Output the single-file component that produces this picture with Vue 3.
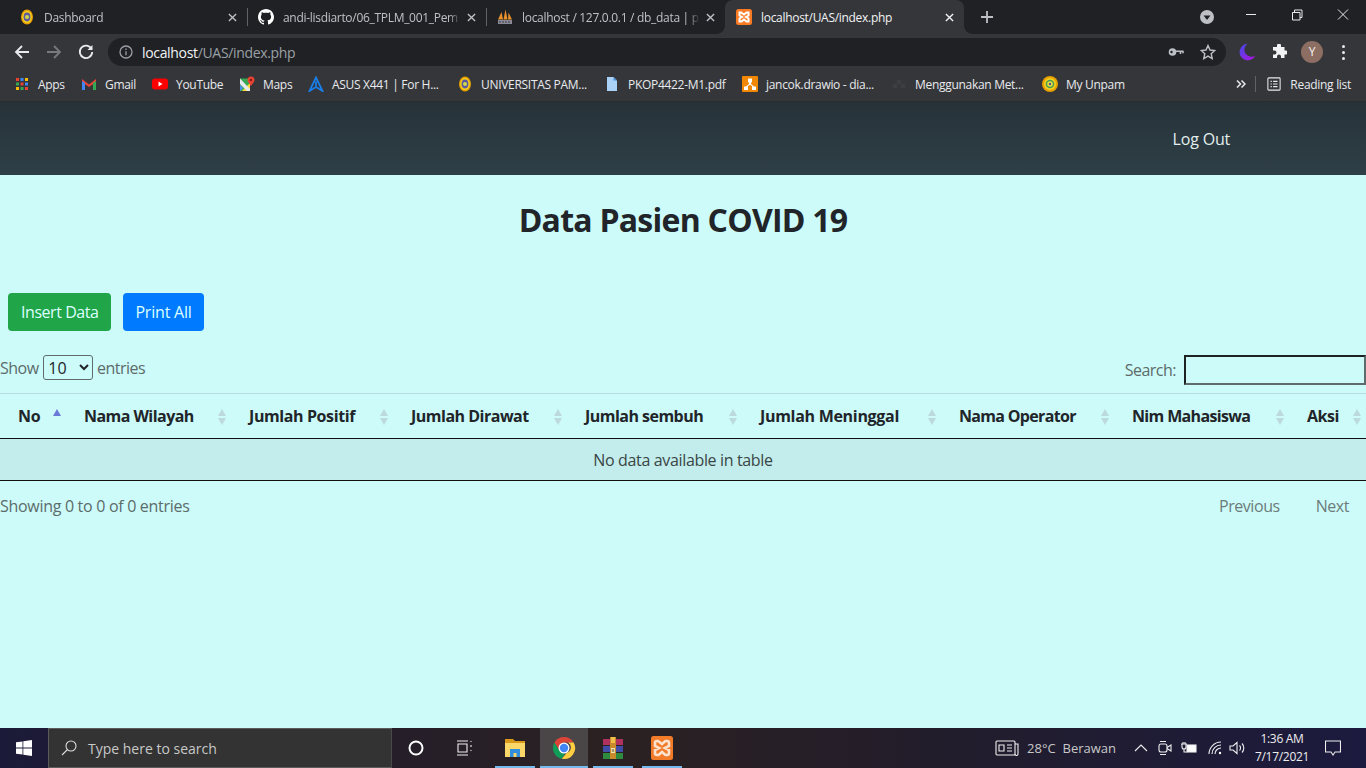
<template>
  <div class="screen">
    <header class="chrome">
      <div class="tabstrip">
        <div class="tabs">
          <div v-for="tab in tabs" :key="tab.title" class="tab" :class="{ active: tab.active }">
            <svg v-if="tab.icon === 'unpam'" class="favicon" viewBox="0 0 16 16">
              <ellipse cx="8" cy="8" rx="6" ry="7.5" fill="#e8a000" /><ellipse cx="8" cy="8" rx="4.8" ry="6" fill="#f2d020" /><ellipse cx="8" cy="8" rx="3.4" ry="4.4" fill="#5f58a0" /><circle cx="8" cy="8" r="2" fill="#cdd84a" />
            </svg>
            <svg v-else-if="tab.icon === 'github'" class="favicon" viewBox="0 0 16 16">
              <path fill="#fff" d="M8 0C3.6 0 0 3.6 0 8c0 3.5 2.3 6.5 5.500 7.600.4.1.5-.2.5-.4v-1.400c-2.200.5-2.700-1-2.700-1-.4-.9-.9-1.200-.9-1.200-.7-.5.1-.5.1-.5.8.1 1.200.8 1.200.8.700 1.200 1.900.9 2.300.7.1-.5.3-.9.5-1.100-1.800-.2-3.600-.9-3.600-4 0-.9.3-1.600.8-2.100-.1-.2-.4-1 .1-2.100 0 0 .7-.2 2.200.8.6-.2 1.300-.3 2-.3s1.400.1 2 .3c1.500-1 2.200-.8 2.200-.8.4 1.100.2 1.900.1 2.100.5.6.8 1.300.8 2.100 0 3.100-1.900 3.700-3.700 3.900.3.3.6.8.6 1.500v2.200c0 .2.1.5.6.4C13.700 14.500 16 11.500 16 8c0-4.400-3.600-8-8-8z" />
            </svg>
            <svg v-else-if="tab.icon === 'pma'" class="favicon" viewBox="0 0 16 16">
              <path fill="#e8912d" d="M1 10.500 4.500 3 6 10.500zM6.500 10.500 8.500 0.500l2 10zM11 10.500 11.500 3.500l3.500 7z" /><rect x="1" y="11" width="14" height="4" fill="#8a8a96" /><path d="M3 12v2M6 12v2M9 12v2M12 12v2" stroke="#3a3a44" stroke-width="1" />
            </svg>
            <svg v-else class="favicon" viewBox="0 0 16 16">
              <rect width="16" height="16" rx="2.500" fill="#fb7a24" />
              <path fill="none" stroke="#fff" stroke-width="2" d="M5 3.500H3.500V6.500L6 8 3.500 9.500V12.500H5.500L8 10.500 10.500 12.500H12.500V9.500L10 8 12.500 6.500V3.500H10.500L8 5.500z" />
            </svg>
            <span class="tab-title">{{ tab.title }}</span>
            <svg class="tab-close" viewBox="0 0 10 10"><path d="M1 1l8 8M9 1l-8 8" /></svg>
          </div>
        </div>
        <svg class="new-tab" viewBox="0 0 12 12"><path d="M6 0v12M0 6h12" /></svg>
        <div class="caption">
          <span class="tab-search"><svg viewBox="0 0 14 14"><circle cx="7" cy="7" r="7" fill="#bdc1c6" /><path d="M3.500 5.500h7L7 10z" fill="#202124" /></svg></span>
          <svg class="win-btn" viewBox="0 0 46 30"><path d="M18 14.500h10" /></svg>
          <svg class="win-btn" viewBox="0 0 46 30"><path d="M18.500 12.500h7.500v7.500h-7.500zM20.500 12.500v-2.500h7.500v7.500h-2" /></svg>
          <svg class="win-btn" viewBox="0 0 46 30"><path d="M18 9.500l10 10M28 9.500l-10 10" /></svg>
        </div>
      </div>
      <div class="toolbar">
        <svg class="nav-icon" viewBox="0 0 16 16"><path d="M15 8H2M8 2 2 8l6 6" stroke="#e8eaed" /></svg>
        <svg class="nav-icon" viewBox="0 0 16 16"><path d="M1 8h13M8 2l6 6-6 6" stroke="#77797d" /></svg>
        <svg class="nav-icon" viewBox="0 0 16 16"><path d="M13.500 5A6.200 6.200 0 1 0 14.200 8" stroke="#e8eaed" /><path d="M14.500 1v5h-5z" fill="#e8eaed" /></svg>
        <div class="omnibox">
          <svg class="info" viewBox="0 0 14 14"><circle cx="7" cy="7" r="6" /><path d="M7 6.200v4M7 3.600v1.400" /></svg>
          <span class="url"><b>localhost</b>/UAS/index.php</span>
          <svg class="key" viewBox="0 0 16 16"><circle cx="4.500" cy="8" r="3.800" fill="#bdc1c6" /><circle cx="3.500" cy="8" r="1.200" fill="#202124" /><path d="M7 7.200h8.500M12.500 7.200v2.800M15 7.200v2" /></svg>
          <svg class="star" viewBox="0 0 16 16"><path d="M8 1.500l2 4.500 4.800.5-3.600 3.200 1 4.800L8 12.100l-4.200 2.400 1-4.800L1.200 6.500 6 6z" /></svg>
        </div>
        <svg class="ext moon" viewBox="0 0 18 18">
          <defs><linearGradient id="moonFill" x1="0" y1="0" x2="1" y2="1"><stop offset="0" stop-color="#3f4be8" /><stop offset="1" stop-color="#b412e0" /></linearGradient></defs>
          <path fill="url(#moonFill)" d="M9.500 .8A8.300 8.300 0 1 0 17.400 12.500 6.600 6.600 0 0 1 9.500 .8z" />
        </svg>
        <svg class="ext puzzle" viewBox="0 0 16 16"><path fill="#f1f3f4" d="M6 1.500a2 2 0 0 1 4 0V3h3.500v3.500H15a2 2 0 0 1 0 4h-1.500V14H10v-1.500a2 2 0 0 0-4 0V14H2v-3.500h1.500a2 2 0 0 0 0-4H2V3h4z" /></svg>
        <span class="avatar">Y</span>
        <span class="dots"><i></i><i></i><i></i></span>
      </div>
      <div class="bookmarks">
        <div v-for="mark in bookmarks" :key="mark.label" class="bookmark" :style="{ width: mark.width + 'px' }">
          <svg v-if="mark.icon === 'apps'" class="favicon" viewBox="0 0 16 16">
            <g v-for="(c, i) in appColors" :key="i"><rect :x="2 + (i % 3) * 4.5" :y="2 + Math.floor(i / 3) * 4.5" width="3" height="3" :fill="c" /></g>
          </svg>
          <svg v-else-if="mark.icon === 'gmail'" class="favicon" viewBox="0 0 16 16">
            <path fill="#ea4335" d="M1 3l7 5.500L15 3v3L8 11 1 6z" /><path fill="#4285f4" d="M1 5v9h3V7z" /><path fill="#34a853" d="M15 5v9h-3V7z" />
          </svg>
          <svg v-else-if="mark.icon === 'youtube'" class="favicon" viewBox="0 0 16 16">
            <rect y="2.500" width="16" height="11" rx="3" fill="#f00" /><path fill="#fff" d="M6.500 5.500v5L10.500 8z" />
          </svg>
          <svg v-else-if="mark.icon === 'maps'" class="favicon" viewBox="0 0 16 16">
            <path fill="#35a853" d="M1 2.500h10v12.500H1z" /><path fill="#fdd835" d="M3 15 11 7v8z" /><path fill="#4a8ef0" d="M1 15V9l3 3-3 3z" /><path fill="#e8eaed" d="M1 2.500 11 13v2H8L1 8z" /><path fill="#ea4335" d="M12 .5a3.500 3.500 0 0 1 3.500 3.500c0 2-2 3.500-3.500 6-1.500-2.500-3.500-4-3.500-6A3.500 3.500 0 0 1 12 .5z" /><circle cx="12" cy="4" r="1.200" fill="#7a1d12" />
          </svg>
          <svg v-else-if="mark.icon === 'asus'" class="favicon" viewBox="0 0 16 16">
            <path fill="none" stroke="#1a7de8" stroke-width="1.800" d="M8 1.500 1.500 15 8 11l6.500 4zM8 5.500V11" />
          </svg>
          <svg v-else-if="mark.icon === 'unpam'" class="favicon" viewBox="0 0 16 16">
            <ellipse cx="8" cy="8" rx="6" ry="7.500" fill="#e8a000" /><ellipse cx="8" cy="8" rx="4.800" ry="6" fill="#f2d020" /><ellipse cx="8" cy="8" rx="3.400" ry="4.400" fill="#5f58a0" /><circle cx="8" cy="8" r="2" fill="#cdd84a" />
          </svg>
          <svg v-else-if="mark.icon === 'file'" class="favicon" viewBox="0 0 16 16">
            <path fill="#a8d1f5" d="M3 1h6.500L13 4.500V15H3z" /><path fill="#4a90d9" d="M9.500 1 13 4.500H9.500z" />
          </svg>
          <svg v-else-if="mark.icon === 'drawio'" class="favicon" viewBox="0 0 16 16">
            <rect width="16" height="16" rx="1" fill="#f08705" /><path fill="#fff" d="M6 2.500h4v4H9V8l3 2.500h2v3.500h-4v-3.500h.6L8 8.800 5.400 10.500H6V14H2v-3.500h2L7 8V6.500H6z" />
          </svg>
          <svg v-else-if="mark.icon === 'dim'" class="favicon" viewBox="0 0 16 16">
            <circle cx="4" cy="10" r="2.500" fill="#3d3e41" /><circle cx="8" cy="6" r="2.500" fill="#3d3e41" /><circle cx="12" cy="10" r="2.500" fill="#3d3e41" />
          </svg>
          <svg v-else class="favicon" viewBox="0 0 16 16">
            <circle cx="8" cy="8" r="8" fill="#e8a000" /><circle cx="8" cy="8" r="6" fill="#f2d020" /><circle cx="8" cy="8" r="4.300" fill="#4a9a50" /><circle cx="8" cy="8" r="2.800" fill="#e8e040" /><circle cx="8" cy="8" r="1.200" fill="#5a4a90" />
          </svg>
          <span class="mark-label">{{ mark.label }}</span>
        </div>
        <div class="bookmarks-end">
          <svg class="more" viewBox="0 0 10 10"><path d="M1 1.500 4.500 5 1 8.500M5.500 1.500 9 5 5.500 8.500" /></svg>
          <span class="divider"></span>
          <svg class="reading" viewBox="0 0 16 16"><rect x="1" y="1" width="14" height="14" rx="1" /><path d="M4 5h1.500M7 5h5M4 8h1.500M7 8h5M4 11h1.500M7 11h5" /></svg>
          <span class="mark-label">Reading list</span>
        </div>
      </div>
    </header>

    <nav class="navbar">
      <a class="logout">Log Out</a>
    </nav>

    <main class="page">
      <h1>Data Pasien COVID 19</h1>
      <div class="actions">
        <button class="btn green">Insert Data</button>
        <button class="btn blue">Print All</button>
      </div>
      <div class="dt-top">
        <label class="length">Show
          <select><option>10</option></select>
          entries</label>
        <label class="search">Search: <input type="text" /></label>
      </div>
      <table class="grid">
        <thead>
          <tr>
            <th v-for="(col, i) in columns" :key="col" :class="{ sorted: i === 0 }">
              {{ col }}
              <span class="sort up"></span>
              <span v-if="i > 0" class="sort down"></span>
            </th>
          </tr>
        </thead>
        <tbody>
          <tr><td :colspan="columns.length">No data available in table</td></tr>
        </tbody>
      </table>
      <div class="dt-bottom">
        <span>Showing 0 to 0 of 0 entries</span>
        <span class="pager"><a>Previous</a><a>Next</a></span>
      </div>
    </main>

    <footer class="taskbar">
      <div class="start">
        <svg viewBox="0 0 16 16"><path fill="#fff" d="M0 2.300 6.500 1.400V7.600H0zM7.300 1.300 16 0V7.600H7.300zM0 8.400H6.500V14.600L0 13.700zM7.300 8.400H16V16L7.300 14.700z" /></svg>
      </div>
      <div class="task-search">
        <svg viewBox="0 0 16 16"><circle cx="10" cy="6" r="5" /><path d="M6.500 9.500 1 15" /></svg>
        <span>Type here to search</span>
      </div>
      <div class="task-btn"><svg class="cortana" viewBox="0 0 16 16"><circle cx="8" cy="8" r="6.500" /></svg></div>
      <div class="task-btn"><svg class="taskview" viewBox="0 0 16 16"><path d="M1 1h11M1 15h11M2 4h9v8H2zM15 1v1M15 5v2M15 10v1" /></svg></div>
      <div class="app running first">
        <svg viewBox="0 0 24 24"><path fill="#d99a1c" d="M2 3h8l2 2h10v5H2z" /><path fill="#fad768" d="M2 7h20v14H2z" /><path fill="#2f8fdc" d="M7 21v-8h10v8h-3.500v-4h-3v4z" /></svg>
      </div>
      <div class="app running current">
        <svg viewBox="0 0 24 24">
          <path fill="#db4437" d="M12 1a11 11 0 0 1 9.600 5.500H12A5.500 5.500 0 0 0 7 14L2.400 6.500A11 11 0 0 1 12 1z" />
          <path fill="#0f9d58" d="M2.400 6.500 7 14a5.500 5.500 0 0 0 6 3.400L9.800 22.800A11 11 0 0 1 2.400 6.500z" />
          <path fill="#ffcd40" d="M21.600 6.500A11 11 0 0 1 9.800 22.800L14.800 16.700A5.500 5.500 0 0 0 16 6.500z" />
          <circle cx="12" cy="12" r="5.500" fill="#fff" /><circle cx="12" cy="12" r="4.200" fill="#4285f4" />
        </svg>
      </div>
      <div class="app running">
        <svg viewBox="0 0 24 24"><rect x="2" y="3" width="20" height="6" fill="#b0305e" /><rect x="2" y="10" width="20" height="6" fill="#3f4da8" /><rect x="2" y="17" width="20" height="6" fill="#2d8a3e" /><path fill="#c98a2b" d="M9 1h6v22H9z" /><path fill="#f0c04a" d="M10 1h4v6h-4z" /><rect x="10" y="12" width="4" height="5" fill="#f2e4b0" /><path d="M11.300 13v3M12.700 13v3" stroke="#5a4020" stroke-width=".6" /></svg>
      </div>
      <div class="app running">
        <svg viewBox="0 0 24 24"><rect x="1" width="22" height="24" rx="2.500" fill="#f27b2a" /><path fill="none" stroke="#fbe3d0" stroke-width="2.600" d="M8 5H7a2 2 0 0 0-2 2v3l4 2-4 2v3a2 2 0 0 0 2 2h1.500L12 16l3.500 3H17a2 2 0 0 0 2-2v-3l-4-2 4-2V7a2 2 0 0 0-2-2h-1.500L12 8z" /></svg>
      </div>
      <div class="tray">
        <svg class="news" viewBox="0 0 24 16"><rect x="1" y="1" width="19" height="14" rx="1" /><path d="M20 4h3v10a1.500 1.500 0 0 1-3 0M4 5h5v6H4zM12 5h5M12 8h5M12 11h5" /></svg>
        <span class="weather">28°C &nbsp;Berawan</span>
        <svg class="tray-icon" viewBox="0 0 16 14"><path d="M2 10l6-6 6 6" /></svg>
        <svg class="tray-icon" viewBox="0 0 16 16"><rect x="2" y="4" width="8" height="8" rx="2" /><path d="M10 7.500l4-2.500v6l-4-2.500M3 1.500h6M3 14.500h6" /></svg>
        <svg class="tray-icon battery" viewBox="0 0 16 14"><rect x="6" y="4" width="9" height="7" fill="#fff" /><path d="M1 3v3a2 2 0 0 0 4 0V3M0 3h6M3 8v3h3M2 1v2M4 1v2" /></svg>
        <svg class="tray-icon wifi" viewBox="0 0 16 14"><path d="M1 13A12 12 0 0 1 13 1M4 13a9 9 0 0 1 9-9M7 13a6 6 0 0 1 6-6" /><circle cx="12" cy="12" r="1.200" fill="#fff" /></svg>
        <svg class="tray-icon volume" viewBox="0 0 16 14"><path d="M1 5h3l4-3.500v11L4 9H1zM10.500 4.500a3.500 3.500 0 0 1 0 5M13 2.500a6.500 6.500 0 0 1 0 9" /></svg>
        <div class="clock"><span>1:36 AM</span><span>7/17/2021</span></div>
        <svg class="notify" viewBox="0 0 16 16"><path d="M.5 1h15v11h-5.500L8 15l-2-3H.5z" /></svg>
      </div>
    </footer>
  </div>
</template>

<script setup>
const tabs = [
  { title: 'Dashboard', icon: 'unpam' },
  { title: 'andi-lisdiarto/06_TPLM_001_Pem', icon: 'github' },
  { title: 'localhost / 127.0.0.1 / db_data | p', icon: 'pma' },
  { title: 'localhost/UAS/index.php', icon: 'xampp', active: true }
]

const appColors = ['#ea4335', '#4285f4', '#fbbc05', '#34a853', '#ea4335', '#4285f4', '#fbbc05', '#34a853', '#ea4335']

// lebar tiap item mengikuti jarak asli di bookmark bar
const bookmarks = [
  { label: 'Apps', icon: 'apps', width: 67 },
  { label: 'Gmail', icon: 'gmail', width: 71 },
  { label: 'YouTube', icon: 'youtube', width: 87 },
  { label: 'Maps', icon: 'maps', width: 69 },
  { label: 'ASUS X441 | For H...', icon: 'asus', width: 149 },
  { label: 'UNIVERSITAS PAM...', icon: 'unpam', width: 147 },
  { label: 'PKOP4422-M1.pdf', icon: 'file', width: 138 },
  { label: 'jancok.drawio - dia...', icon: 'drawio', width: 149 },
  { label: 'Menggunakan Met...', icon: 'dim', width: 151 },
  { label: 'My Unpam', icon: 'circle', width: 98 }
]

const columns = [
  'No',
  'Nama Wilayah',
  'Jumlah Positif',
  'Jumlah Dirawat',
  'Jumlah sembuh',
  'Jumlah Meninggal',
  'Nama Operator',
  'Nim Mahasiswa',
  'Aksi'
]
</script>

<style>
html, body { margin: 0; background: #ccfbf9; }
</style>

<style scoped>
.screen {
  width: 1366px; height: 768px;
  display: flex; flex-direction: column;
  overflow: hidden;
  font-family: "Open Sans", "Noto Sans", sans-serif;
  background: #ccfbf9;
  color: #212529;
}
svg { display: block; flex: none; }

.chrome { background: #35363a; color: #e8eaed; font-size: 12px; }
.tabstrip { height: 34px; background: #202124; display: flex; align-items: stretch; margin-bottom: 3px; }
.tabs { display: flex; padding-left: 8px; }
.tab { width: 239px; box-sizing: border-box; display: flex; align-items: center; padding: 0 10px 0 11px; position: relative; color: #bdc1c6; }
.tab.active { background: #35363a; color: #f1f3f4; border-radius: 8px 8px 0 0; height: 37px; padding-bottom: 3px; }
.tab.active::before, .tab.active::after { content: ""; position: absolute; bottom: 3px; width: 8px; height: 8px; }
.tab.active::before { left: -8px; background: radial-gradient(circle at 0 0, transparent 7.5px, #35363a 8px); }
.tab.active::after { right: -8px; background: radial-gradient(circle at 100% 0, transparent 7.5px, #35363a 8px); }
.tab + .tab:not(.active)::before { content: ""; position: absolute; left: 0; top: 8px; height: 18px; width: 1px; background: #5f6368; }
.tab-title { margin-left: 9px; flex: 1; white-space: nowrap; overflow: hidden; letter-spacing: -0.3px; }
.tab:not(.active) .tab-title { -webkit-mask-image: linear-gradient(90deg, #000 calc(100% - 12px), transparent); mask-image: linear-gradient(90deg, #000 calc(100% - 12px), transparent); }
.tab-close { width: 9px; height: 9px; margin-left: 6px; }
.tab-close path { stroke: currentColor; stroke-width: 1.5; fill: none; }
.favicon { width: 16px; height: 16px; }
.new-tab { width: 12px; height: 12px; margin: 11px 0 0 17px; }
.new-tab path { stroke: #bdc1c6; stroke-width: 1.8; fill: none; }
.caption { margin-left: auto; display: flex; align-items: flex-start; }
.tab-search { width: 14px; height: 14px; margin: 10px 14px 0 0; }
.win-btn { width: 46px; height: 30px; }
.win-btn path { stroke: #e8eaed; fill: none; stroke-width: 1; }

.toolbar { height: 30px; display: flex; align-items: center; padding-left: 14px; }
.nav-icon { width: 16px; height: 16px; margin-right: 16px; }
.nav-icon path { stroke-width: 1.8; fill: none; }
.nav-icon path[fill] { fill: #e8eaed; stroke: none; }
.omnibox { width: 1118px; height: 28px; margin-left: -2px; background: #202124; border-radius: 14px; display: flex; align-items: center; box-sizing: border-box; padding: 0 10px 0 11px; }
.info { width: 14px; height: 14px; }
.info circle, .info path { stroke: #9aa0a6; fill: none; stroke-width: 1.3; }
.url { margin-left: 9px; font-size: 14px; color: #9aa0a6; letter-spacing: -0.33px; flex: 1; }
.url b { color: #f1f3f4; font-weight: 400; }
.key { width: 16px; height: 16px; margin-right: 16px; }
.key path { stroke: #bdc1c6; fill: none; stroke-width: 1.6; }
.star { width: 16px; height: 16px; }
.star path { stroke: #bdc1c6; fill: none; stroke-width: 1.4; }
.ext { width: 16px; height: 16px; margin-left: 15px; }
.moon { width: 18px; height: 18px; margin-left: 12px; }
.puzzle { margin-left: 15px; }
.avatar { width: 22px; height: 22px; margin-left: 14px; border-radius: 50%; background: #8d6e63; color: #f1f3f4; font-size: 12px; line-height: 22px; text-align: center; }
.dots { margin-left: 19px; display: flex; flex-direction: column; gap: 3px; }
.dots i { width: 3px; height: 3px; border-radius: 50%; background: #e8eaed; display: block; }

.bookmarks { height: 35px; display: flex; align-items: center; padding-left: 14px; border-bottom: 1px solid #2b2c2f; box-sizing: border-box; }
.bookmark { display: flex; align-items: center; flex: none; }
.mark-label { margin-left: 8px; white-space: nowrap; letter-spacing: -0.3px; color: #e8eaed; }
.bookmarks-end { margin-left: auto; display: flex; align-items: center; padding-right: 15px; }
.more { width: 10px; height: 10px; }
.more path { stroke: #e8eaed; fill: none; stroke-width: 1.5; }
.divider { width: 1px; height: 16px; background: #5f6368; margin: 0 11px 0 9px; }
.reading { width: 14px; height: 14px; margin-right: 1px; }
.reading rect, .reading path { stroke: #e8eaed; fill: none; stroke-width: 1.2; }

.navbar { height: 73px; flex: none; display: flex; align-items: center; justify-content: flex-end; padding-right: 136px; background: linear-gradient(#263238, #2f3f47); }
.logout { color: #e3eeee; font-size: 16px; letter-spacing: -0.2px; }

.page { flex: 1; min-height: 0; font-size: 16px; color: #5d6b6b; }
h1 { margin: 0; padding-top: 24px; height: 94px; box-sizing: border-box; text-align: center; font-size: 32px; line-height: 42px; font-weight: 700; color: #212529; letter-spacing: -0.75px; }
.actions { display: flex; gap: 12px; padding: 24px 0 0 8px; }
.btn { height: 38px; border: 0; border-radius: 4px; font: inherit; color: #dff; padding: 0 13px; letter-spacing: -0.45px; }
.green { background: #20a548; }
.blue { background: #007bff; letter-spacing: -0.2px; padding: 0 12px; }
.dt-top { display: flex; justify-content: space-between; align-items: flex-start; margin-top: 24px; height: 38px; letter-spacing: -0.5px; }
.length select { width: 50px; height: 25px; margin-left: 1px; font: inherit; letter-spacing: 0; color: #212529; background: transparent; border: 1px solid #5d6b6b; border-radius: 3px; }
.search { display: flex; align-items: center; gap: 8px; }
.search input { width: 182px; height: 30px; box-sizing: border-box; background: transparent; border: 2px solid; border-color: #1d2322 #5d6b6b #5d6b6b #1d2322; padding: 0; }
.grid { width: 1366px; border-collapse: collapse; table-layout: fixed; }
th { position: relative; height: 45px; padding: 0 0 0 18px; box-sizing: border-box; border-top: 1px solid #b7dfe3; border-bottom: 1px solid #111; color: #212529; text-align: left; font-weight: 700; letter-spacing: -0.5px; white-space: nowrap; }
th:nth-child(1) { width: 66px; letter-spacing: -0.3px; }
th:nth-child(2) { width: 165px; letter-spacing: -0.55px; }
th:nth-child(3) { width: 162px; letter-spacing: -0.4px; }
th:nth-child(4) { width: 174px; letter-spacing: -0.5px; }
th:nth-child(5) { width: 175px; letter-spacing: -0.53px; }
th:nth-child(6) { width: 199px; letter-spacing: -0.3px; }
th:nth-child(7) { width: 173px; letter-spacing: -0.68px; }
th:nth-child(8) { width: 175px; letter-spacing: -0.65px; }
th:nth-child(9) { letter-spacing: -0.5px; }
.sort { position: absolute; right: 5px; width: 0; height: 0; border-left: 4.5px solid transparent; border-right: 4.5px solid transparent; }
.sort.up { top: 15px; border-bottom: 7px solid #bcd9db; }
.sort.down { top: 24px; border-top: 7px solid #bcd9db; }
.sorted .sort.up { border-bottom-color: #6a78d8; }
td { height: 42px; padding: 0; box-sizing: border-box; text-align: center; background: #c2edec; border-bottom: 1px solid #111; letter-spacing: -0.35px; color: #3a4545; }
.dt-bottom { display: flex; justify-content: space-between; padding-top: 14px; letter-spacing: -0.3px; }
.pager { display: flex; gap: 36px; padding-right: 17px; color: #6d7b7b; letter-spacing: -0.45px; }

.taskbar { height: 40px; flex: none; display: flex; align-items: stretch; background: linear-gradient(90deg, #1b1a38, #2b2122 45%, #221d2c 70%, #1c1a3e); color: #e8e8e8; }
.start { width: 48px; display: flex; align-items: center; justify-content: center; }
.start svg { width: 16px; height: 16px; }
.task-search { width: 344px; box-sizing: border-box; background: #333; border: 1px solid #5c5c5c; border-right-color: #4a4a4a; display: flex; align-items: center; padding-left: 12px; font-size: 14px; color: #c8c8c8; }
.task-search svg { width: 16px; height: 16px; margin-right: 11px; }
.task-search path, .task-search circle { stroke: #ddd; fill: none; stroke-width: 1.1; }
.task-btn { width: 48px; display: flex; align-items: center; justify-content: center; }
.task-btn svg { width: 16px; height: 16px; }
.cortana circle { stroke: #fff; fill: none; stroke-width: 2; }
.taskview path { stroke: #eee; fill: none; stroke-width: 1.1; }
.app { width: 48px; margin-left: 1px; display: flex; align-items: center; justify-content: center; position: relative; box-sizing: border-box; }
.app.first { margin-left: 3px; }
.app svg { width: 24px; height: 24px; }
.app.running::after { content: ""; position: absolute; left: 4px; right: 4px; bottom: 0; height: 2px; background: #76b9ed; }
.app.current { background: #4a4648; }
.app.current::after { left: 0; right: 0; }
.tray { margin-left: auto; display: flex; align-items: center; padding-right: 25px; }
.news { width: 24px; height: 16px; margin-right: 8px; }
.news rect, .news path { stroke: #eee; fill: none; stroke-width: 1.1; }
.weather { font-size: 13px; color: #c8c8c8; margin-right: 17px; white-space: nowrap; }
.tray-icon { width: 16px; height: 16px; margin-right: 8px; }
.tray-icon path, .tray-icon rect { stroke: #eee; fill: none; stroke-width: 1.1; }
.tray-icon rect[fill] { fill: #fff; }
.battery { margin-right: 11px; }
.wifi { margin-right: 5px; }
.volume { margin-right: 11px; }
.clock { display: flex; flex-direction: column; align-items: center; font-size: 12px; line-height: 18px; letter-spacing: -0.3px; color: #eee; margin-right: 17px; width: 52px; }
.notify { width: 16px; height: 16px; }
.notify path { stroke: #eee; fill: none; stroke-width: 1.1; }
</style>
